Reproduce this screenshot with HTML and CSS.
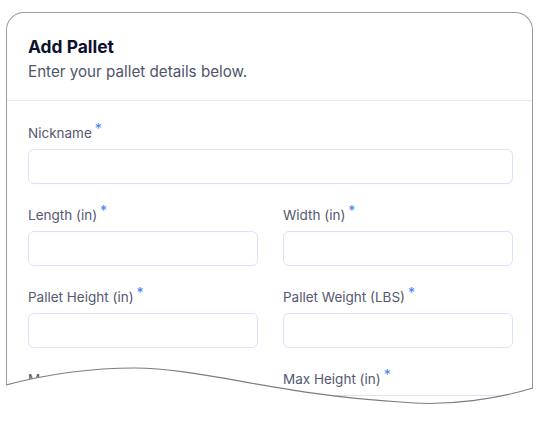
FILE: index.html
```html
<!DOCTYPE html>
<html lang="en">
<head>
<meta charset="utf-8">
<title>Add Pallet</title>
<link rel="stylesheet" href="styles.css">
</head>
<body>
<div class="stage">
  <div class="card">
    <div class="card-header">
      <h1 class="title">Add Pallet</h1>
      <p class="subtitle">Enter your pallet details below.</p>
    </div>
    <div class="card-body">
      <div class="row">
        <div class="field">
          <label class="label">Nickname<span class="req">*</span></label>
          <div class="input"></div>
        </div>
      </div>
      <div class="row two">
        <div class="field">
          <label class="label">Length (in)<span class="req">*</span></label>
          <div class="input"></div>
        </div>
        <div class="field">
          <label class="label">Width (in)<span class="req">*</span></label>
          <div class="input"></div>
        </div>
      </div>
      <div class="row two">
        <div class="field">
          <label class="label">Pallet Height (in)<span class="req">*</span></label>
          <div class="input"></div>
        </div>
        <div class="field">
          <label class="label">Pallet Weight (LBS)<span class="req">*</span></label>
          <div class="input"></div>
        </div>
      </div>
      <div class="row two">
        <div class="field">
          <label class="label">Max Weight (LBS)<span class="req">*</span></label>
          <div class="input"></div>
        </div>
        <div class="field">
          <label class="label">Max Height (in)<span class="req">*</span></label>
          <div class="input"></div>
        </div>
      </div>
    </div>
  </div>
  <svg class="tear" width="540" height="82" viewBox="0 340 540 82" xmlns="http://www.w3.org/2000/svg">
    <path d="M0 385 L6 385 C40 376 80 368 135 368 C200 368 280 395 400 402 C450 407 500 398 533 388 L540 388 L540 422 L0 422 Z" fill="#ffffff"/>
    <path d="M6 385 C40 376 80 368 135 368 C200 368 280 395 400 402 C450 407 500 398 533 388" fill="none" stroke="#7d7d7d" stroke-width="1.1"/>
  </svg>
</div>
</body>
</html>
```
FILE: styles.css
```css
html, body {
  margin: 0;
  padding: 0;
  background: #ffffff;
}
body {
  font-family: "Inter", "Noto Sans", sans-serif;
  width: 540px;
  height: 422px;
  overflow: hidden;
}
.stage {
  position: relative;
  width: 540px;
  height: 422px;
  padding: 12px 7px 0 6px;
  box-sizing: border-box;
}
.card {
  border: 1px solid #9b9b9b;
  border-bottom: none;
  border-radius: 18px 18px 0 0;
  height: 420px;
  background: #ffffff;
}
.card-header {
  padding: 23px 20px 18px 21px;
  border-bottom: 1px solid #e8eaf2;
}
.title {
  margin: 0;
  font-size: 17.4px;
  line-height: 22px;
  font-weight: 700;
  color: #0d1030;
}
.subtitle {
  margin: 4px 0 0;
  font-size: 15.2px;
  line-height: 20px;
  color: #50546a;
}
.card-body {
  padding: 23px 19px 0 21px;
  display: flex;
  flex-direction: column;
  gap: 22px;
}
.row {
  display: grid;
  grid-template-columns: 1fr;
}
.row.two {
  grid-template-columns: 1fr 1fr;
  column-gap: 25px;
}
.field {
  display: flex;
  flex-direction: column;
  gap: 7px;
}
.label {
  font-size: 13.5px;
  line-height: 18px;
  color: #545870;
}
.req {
  color: #3b82f6;
  font-size: 14px;
  margin-left: 3px;
  position: relative;
  top: -4px;
}
.input {
  height: 33px;
  border: 1px solid #d8e4fa;
  border-radius: 6px;
  background: #ffffff;
}
.tear {
  position: absolute;
  left: 0;
  top: 340px;
  display: block;
}
```
